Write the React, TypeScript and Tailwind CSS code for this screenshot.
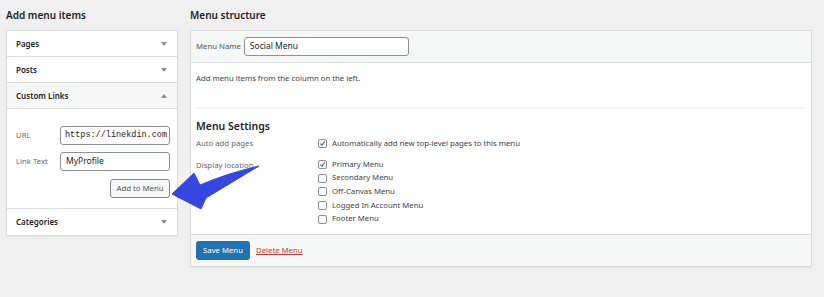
import React from "react";

const font = { fontFamily: '"Noto Sans", "Open Sans", sans-serif' };

function Caret({ up = false }: { up?: boolean }) {
  return (
    <svg width="6" height="4" viewBox="0 0 6 4" className="text-[#8c8f94]">
      {up ? <path d="M0 4 L3 0 L6 4 Z" fill="currentColor" /> : <path d="M0 0 L6 0 L3 4 Z" fill="currentColor" />}
    </svg>
  );
}

function Box({ checked = false }: { checked?: boolean }) {
  return (
    <span className="flex h-[9px] w-[9px] shrink-0 items-center justify-center rounded-[2px] border border-[#8c8f94] bg-white">
      {checked && (
        <svg width="9" height="9" viewBox="0 0 10 10">
          <path d="M2 5.2 L4.2 7.4 L8.4 1.8" fill="none" stroke="#2271b1" strokeWidth="1.6" />
        </svg>
      )}
    </span>
  );
}

const sections = ["Pages", "Posts"];
const locations = [
  { label: "Primary Menu", checked: true },
  { label: "Secondary Menu", checked: false },
  { label: "Off-Canvas Menu", checked: false },
  { label: "Logged In Account Menu", checked: false },
  { label: "Footer Menu", checked: false },
];

export default function App() {
  return (
    <div style={font} className="relative flex h-[297px] w-[824px] gap-[12px] bg-[#f0f0f0] pl-[6px] text-[#1d2327]">
      {/* left column */}
      <div className="w-[172px]">
        <h2 className="flex h-[30px] items-center text-[10px] font-semibold leading-none">Add menu items</h2>
        <div className="border border-[#dcdcde] bg-white shadow-[0_1px_1px_rgba(0,0,0,0.04)]">
          {sections.map((s) => (
            <div key={s} className="flex h-[26px] items-center justify-between border-b border-[#dcdcde] pl-[9px] pr-[10px]">
              <span className="text-[8px] font-semibold">{s}</span>
              <Caret />
            </div>
          ))}
          <div className="flex h-[26px] items-center justify-between border-b border-[#dcdcde] bg-[#f6f7f7] pl-[9px] pr-[10px]">
            <span className="text-[8px] font-semibold">Custom Links</span>
            <Caret up />
          </div>
          <div className="flex h-[100px] flex-col border-b border-[#dcdcde] pl-[9px] pr-[7px] pt-[17px]">
            <div className="flex items-center justify-between">
              <span className="text-[7.75px] text-[#646970]">URL</span>
              <div className="flex h-[19px] w-[110px] items-center rounded-[3px] border border-[#8c8f94] px-[4px] text-[8.5px]" style={{ fontFamily: '"Liberation Mono", monospace' }}>
                https://linekdin.com
              </div>
            </div>
            <div className="mt-[7px] flex items-center justify-between">
              <span className="text-[7.75px] text-[#646970]">Link Text</span>
              <div className="flex h-[19px] w-[110px] items-center rounded-[3px] border border-[#8c8f94] px-[5px] text-[8.5px]">
                MyProfile
              </div>
            </div>
            <div className="mt-[8px] flex justify-end">
              <button className="h-[19px] w-[60px] rounded-[3px] border border-[#7e8993] bg-[#f6f7f7] text-[7.75px] text-[#50575e]">
                Add to Menu
              </button>
            </div>
          </div>
          <div className="flex h-[26px] items-center justify-between pl-[9px] pr-[10px]">
            <span className="text-[8px] font-semibold">Categories</span>
            <Caret />
          </div>
        </div>
      </div>

      {/* right column */}
      <div className="w-[622px]">
        <h2 className="flex h-[30px] items-center text-[10px] font-semibold leading-none">Menu structure</h2>
        <div className="border border-[#dcdcde] bg-white shadow-[0_1px_1px_rgba(0,0,0,0.04)]">
          <div className="flex h-[32px] items-center gap-[3px] border-b border-[#dcdcde] bg-[#f6f7f7] px-[5px]">
            <span className="text-[7.75px] text-[#50575e]">Menu Name</span>
            <div className="flex h-[19px] w-[165px] items-center rounded-[3px] border border-[#8c8f94] bg-white px-[5px] text-[8.5px]">
              Social Menu
            </div>
          </div>
          <div className="px-[5px]">
            <p className="flex h-[31px] items-center text-[7.75px] text-[#3c434a]">Add menu items from the column on the left.</p>
            <div className="mt-[13px] h-[2px] bg-[#f6f7f7]" />
            <h3 className="mt-[10px] text-[10.5px] font-semibold leading-[14px]">Menu Settings</h3>
            <div className="mt-[5px] flex items-center">
              <span className="w-[122px] text-[7.75px] text-[#646970]">Auto add pages</span>
              <Box checked />
              <span className="ml-[5px] text-[7.75px] text-[#3c434a]">Automatically add new top-level pages to this menu</span>
            </div>
            <div className="mt-[9px] flex pb-[9px]">
              <span className="w-[122px] text-[7.75px] leading-[12px] text-[#646970]">Display location</span>
              <div className="flex flex-col gap-[1.6px]">
                {locations.map((l) => (
                  <div key={l.label} className="flex h-[12px] items-center">
                    <Box checked={l.checked} />
                    <span className="ml-[5px] text-[7.75px] text-[#3c434a]">{l.label}</span>
                  </div>
                ))}
              </div>
            </div>
          </div>
          <div className="flex h-[32px] items-center gap-[6px] border-t border-[#dcdcde] bg-[#f6f7f7] px-[5px]">
            <button className="h-[19px] w-[54px] rounded-[3px] bg-[#2271b1] text-[7.75px] text-white">Save Menu</button>
            <a className="text-[7.75px] text-[#c23f42] underline">Delete Menu</a>
          </div>
        </div>
      </div>

      {/* annotation arrow */}
      <svg className="pointer-events-none absolute left-0 top-0" width="824" height="297" viewBox="0 0 824 297">
        <path
          d="M172 194 L194 173 L200 185 Q228 173 259 166 Q234 181 206 198 L201 209 Z"
          fill="#3547e0"
          stroke="#3547e0"
          strokeWidth="1"
          strokeLinejoin="round"
        />
      </svg>
    </div>
  );
}
